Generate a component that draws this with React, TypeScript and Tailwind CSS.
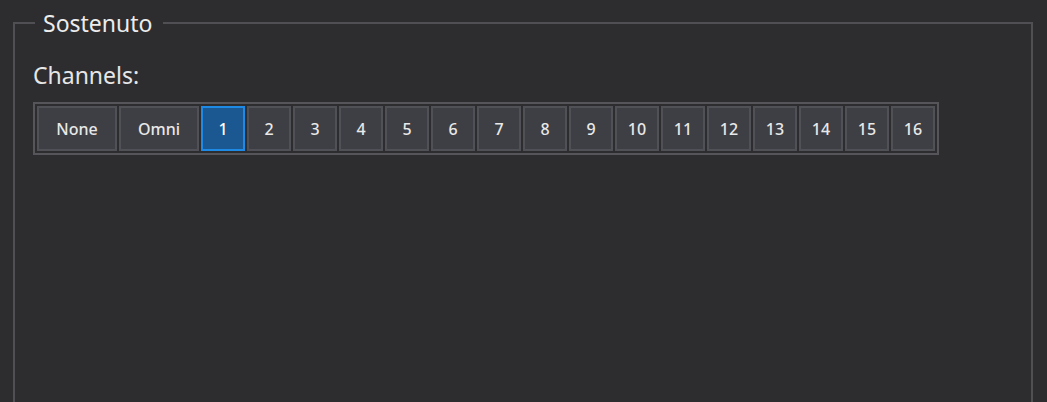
const channels = ["None", "Omni", ...Array.from({ length: 16 }, (_, i) => String(i + 1))];

export default function App() {
  const selected = "1";

  return (
    <div className="h-[402px] w-full overflow-hidden bg-[#2d2d30] font-['Noto_Sans',sans-serif] text-[#e6e6e6]">
      <fieldset className="ml-[13px] mt-[9px] h-[420px] w-[1020px] border-2 border-[#505054] pl-[18px]">
        <legend className="ml-[2px] pl-[8px] pr-[11px] text-[23px] leading-[28px] text-[#ececec]">Sostenuto</legend>

        <div className="mt-[24px] text-[23px] leading-[28px]">Channels:</div>

        <div className="mt-[13px] flex w-fit gap-[2px] border-2 border-[#56565a] p-[2px]">
          {channels.map((c) => {
            const isSel = c === selected;
            const wide = c === "None" || c === "Omni";
            return (
              <button
                key={c}
                className={
                  "flex h-[45px] items-center justify-center border-2 text-[16px] font-medium " +
                  (wide ? "w-[80px] " : "w-[44px] ") +
                  (isSel
                    ? "border-[#1e8ae6] bg-[#1b5790] text-white"
                    : "border-[#505156] bg-[#3e3f44] text-[#e8e8e8]")
                }
              >
                {c}
              </button>
            );
          })}
        </div>
      </fieldset>
    </div>
  );
}
